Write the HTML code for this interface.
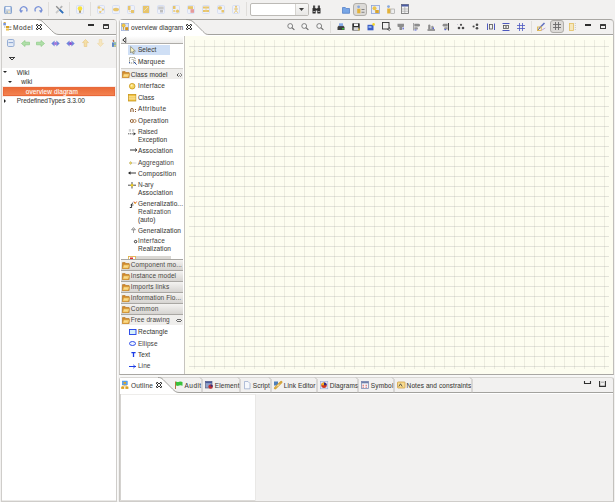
<!DOCTYPE html>
<html><head><meta charset="utf-8"><style>
html,body{margin:0;padding:0;}
body{width:615px;height:502px;position:relative;overflow:hidden;background:#f2f1f0;font-family:"Liberation Sans",sans-serif;}
.t{position:absolute;white-space:nowrap;line-height:8px;font-family:"Liberation Sans",sans-serif;-webkit-text-stroke:0.06px currentColor;}
svg{overflow:visible}
</style></head><body>
<svg style="position:absolute;left:4px;top:6px;" width="8" height="8" viewBox="0 0 8 8"><rect x="0.5" y="0.5" width="7" height="7" rx="0.8" fill="#b5c9e6" stroke="#7d9ccb" stroke-width="0.9"/><rect x="2" y="0.8" width="4" height="2.6" fill="#f4f6fb"/><rect x="1.8" y="4.6" width="4.4" height="2.8" fill="#e9e2c8"/><rect x="2.6" y="5.2" width="1" height="1.8" fill="#7d9ccb"/></svg>
<svg style="position:absolute;left:19px;top:6px;" width="9" height="7" viewBox="0 0 9 7"><g ><path d="M2.2 6.2 A3.3 3.3 0 1 1 7.6 5.5" fill="none" stroke="#7b93d8" stroke-width="1.25"/><path d="M0.3 3.8 L4.2 4.6 L2 7z" fill="#7b93d8"/></g></svg>
<svg style="position:absolute;left:34px;top:6px;" width="9" height="7" viewBox="0 0 9 7"><g transform="translate(9,0) scale(-1,1)"><path d="M2.2 6.2 A3.3 3.3 0 1 1 7.6 5.5" fill="none" stroke="#7b93d8" stroke-width="1.25"/><path d="M0.3 3.8 L4.2 4.6 L2 7z" fill="#7b93d8"/></g></svg>
<div style="position:absolute;left:48px;top:2px;width:1px;height:14px;background:#e0dedb"></div>
<svg style="position:absolute;left:55px;top:5px;" width="9" height="9" viewBox="0 0 9 9"><path d="M1.2 1.2 L7.8 7.8" stroke="#8d8d8d" stroke-width="1.3"/><path d="M7.2 1.2 L5.2 3.2" stroke="#b3b3b3" stroke-width="1.8"/><path d="M4.6 4.6 L8.2 8.2" stroke="#2f72c0" stroke-width="1.8"/><path d="M1 8 L3.6 5.4" stroke="#c9c9c9" stroke-width="1.8"/></svg>
<div style="position:absolute;left:69px;top:2px;width:1px;height:14px;background:#e0dedb"></div>
<svg style="position:absolute;left:76px;top:5px;" width="8" height="9" viewBox="0 0 8 9"><rect x="0.5" y="0.5" width="7" height="8" rx="1.2" fill="#eef1fa" stroke="#d5dcf2" stroke-width="0.9"/><circle cx="4" cy="3.6" r="2.3" fill="#f7e23c"/><rect x="3" y="5.6" width="2" height="2.2" fill="#b09a66"/></svg>
<div style="position:absolute;left:90px;top:2px;width:1px;height:14px;background:#e0dedb"></div>
<svg style="position:absolute;left:97px;top:5px;" width="8" height="9" viewBox="0 0 8 9"><rect x="0.5" y="0.5" width="7" height="8" rx="1.2" fill="#eef1fa" stroke="#d5dcf2" stroke-width="0.9"/><circle cx="2" cy="2.5" r="1.3" fill="#e7c56c"/><circle cx="6" cy="4.5" r="1.1" fill="#e7c56c"/><circle cx="3.2" cy="7" r="1.1" fill="#e7c56c"/><path d="M2 2.5 Q5 2 6 4.5 Q5 6.5 3.2 7" fill="none" stroke="#ecd08a" stroke-width="0.6"/></svg>
<svg style="position:absolute;left:112px;top:5px;" width="8" height="9" viewBox="0 0 8 9"><rect x="0.5" y="0.5" width="7" height="8" rx="1.2" fill="#eef1fa" stroke="#d5dcf2" stroke-width="0.9"/><ellipse cx="4" cy="4.5" rx="3" ry="1.8" fill="#e7c56c"/></svg>
<svg style="position:absolute;left:127px;top:5px;" width="8" height="9" viewBox="0 0 8 9"><rect x="0.5" y="0.5" width="7" height="8" rx="1.2" fill="#eef1fa" stroke="#d5dcf2" stroke-width="0.9"/><rect x="1" y="1" width="2.5" height="4" fill="#e7c56c"/><rect x="4" y="5" width="3" height="3" fill="#e7c56c"/><path d="M2.2 5 V6.5 H4" stroke="#ecd08a" stroke-width="0.6" fill="none"/></svg>
<svg style="position:absolute;left:142px;top:5px;" width="8" height="9" viewBox="0 0 8 9"><rect x="0.5" y="0.5" width="7" height="8" rx="1.2" fill="#eef1fa" stroke="#d5dcf2" stroke-width="0.9"/><rect x="1" y="1" width="6" height="7" fill="#e7c56c"/><path d="M2 6 L6 2" stroke="#f6e6b8" stroke-width="0.8"/></svg>
<svg style="position:absolute;left:157px;top:5px;" width="8" height="9" viewBox="0 0 8 9"><rect x="0.5" y="0.5" width="7" height="8" rx="1.2" fill="#eef1fa" stroke="#d5dcf2" stroke-width="0.9"/><rect x="1.2" y="1.5" width="5.5" height="3" fill="#c9c9c9"/><rect x="3" y="5" width="3" height="2.5" fill="#bdbdbd"/></svg>
<svg style="position:absolute;left:172px;top:5px;" width="8" height="9" viewBox="0 0 8 9"><rect x="0.5" y="0.5" width="7" height="8" rx="1.2" fill="#eef1fa" stroke="#d5dcf2" stroke-width="0.9"/><rect x="1" y="1" width="2.5" height="3" fill="#e7c56c"/><circle cx="5.5" cy="6.2" r="1.6" fill="#e7c56c"/><rect x="1.2" y="5" width="2" height="2" fill="#ecd08a"/></svg>
<svg style="position:absolute;left:187px;top:5px;" width="8" height="9" viewBox="0 0 8 9"><rect x="0.5" y="0.5" width="7" height="8" rx="1.2" fill="#eef1fa" stroke="#d5dcf2" stroke-width="0.9"/><rect x="1" y="1.2" width="5" height="3" fill="#e7c56c"/><rect x="3.5" y="4.2" width="3.5" height="3.6" fill="#e59a9a"/></svg>
<svg style="position:absolute;left:202px;top:5px;" width="8" height="9" viewBox="0 0 8 9"><rect x="0.5" y="0.5" width="7" height="8" rx="1.2" fill="#eef1fa" stroke="#d5dcf2" stroke-width="0.9"/><rect x="1" y="1.5" width="6" height="2" fill="#e7c56c"/><rect x="1" y="5" width="6" height="2" fill="#e7c56c"/><path d="M4 1.5 V7" stroke="#ecd08a" stroke-width="0.8"/></svg>
<svg style="position:absolute;left:217px;top:5px;" width="8" height="9" viewBox="0 0 8 9"><rect x="0.5" y="0.5" width="7" height="8" rx="1.2" fill="#eef1fa" stroke="#d5dcf2" stroke-width="0.9"/><ellipse cx="3" cy="3" rx="2.2" ry="1.8" fill="#e7c56c"/><rect x="4.5" y="5" width="2.5" height="2.5" fill="#e7c56c"/></svg>
<svg style="position:absolute;left:232px;top:5px;" width="8" height="9" viewBox="0 0 8 9"><rect x="0.5" y="0.5" width="7" height="8" rx="1.2" fill="#eef1fa" stroke="#d5dcf2" stroke-width="0.9"/><circle cx="4" cy="1.8" r="1" fill="#e7c56c"/><path d="M4 2.8 V5.5 M2 4 H6 M4 5.5 L2.2 7.8 M4 5.5 L5.8 7.8" stroke="#e7c56c" stroke-width="0.9"/></svg>
<div style="position:absolute;left:246px;top:2px;width:1px;height:14px;background:#e0dedb"></div>
<div style="position:absolute;left:250px;top:3px;width:57px;height:11px;border:1px solid #bcbab6;border-radius:2px;background:#fff"></div>
<div style="position:absolute;left:295px;top:4px;width:12px;height:11px;background:linear-gradient(#f8f8f7,#e8e7e5);border-left:1px solid #d6d4d0;border-radius:0 2px 2px 0"></div>
<svg style="position:absolute;left:299px;top:8px;" width="6" height="3" viewBox="0 0 6 3"><path d="M0 0 L5 0 L2.5 3z" fill="#3a3a3a"/></svg>
<svg style="position:absolute;left:312px;top:5px;" width="9" height="9" viewBox="0 0 9 9"><rect x="0.5" y="3" width="3.2" height="5.5" rx="0.6" fill="#303030"/><rect x="5.3" y="3" width="3.2" height="5.5" rx="0.6" fill="#303030"/><rect x="2.5" y="3.5" width="4" height="2" fill="#303030"/><rect x="1" y="0.5" width="2.2" height="2.6" fill="#505050"/><rect x="5.8" y="0.5" width="2.2" height="2.6" fill="#505050"/><rect x="1.2" y="6" width="2" height="1" fill="#aaa"/><rect x="5.8" y="6" width="2" height="1" fill="#aaa"/></svg>
<svg style="position:absolute;left:342px;top:6px;" width="8" height="8" viewBox="0 0 8 8"><path d="M0.5 1.5 h2.8 l0.9 1 h3.3 v4.8 h-7z" fill="#78a6e6" stroke="#4a78c4" stroke-width="0.7"/></svg>
<div style="position:absolute;left:353px;top:3px;width:12px;height:11px;border:1px solid #b0aeaa;border-radius:3px;background:#dcdad7"></div>
<svg style="position:absolute;left:356px;top:5px;" width="9" height="9" viewBox="0 0 9 9"><circle cx="2.6" cy="1.8" r="1.4" fill="#88a8dc"/><rect x="1.2" y="3.8" width="3.2" height="4.5" fill="#e3b23a"/><rect x="5.5" y="4" width="3" height="0.9" fill="#7a7a7a"/><rect x="5.5" y="6.8" width="3" height="0.9" fill="#7a7a7a"/></svg>
<svg style="position:absolute;left:371px;top:5px;" width="9" height="9" viewBox="0 0 9 9"><rect x="0.5" y="0.5" width="8" height="8" fill="#e6ecfa" stroke="#8da3d6" stroke-width="0.8"/><circle cx="3.5" cy="3.2" r="2" fill="#ecc54e"/><rect x="4.2" y="5" width="3.6" height="3" fill="#d9a52e"/></svg>
<svg style="position:absolute;left:386px;top:5px;" width="9" height="9" viewBox="0 0 9 9"><circle cx="2.5" cy="1.6" r="1.4" fill="#88a8dc"/><rect x="1.2" y="3.5" width="3.2" height="5" fill="#e3b23a"/><rect x="4.8" y="4" width="3.8" height="4.5" fill="#ededed" stroke="#999" stroke-width="0.6"/></svg>
<svg style="position:absolute;left:401px;top:4px;" width="8" height="10" viewBox="0 0 8 10"><rect x="0.5" y="0.5" width="7" height="9" fill="#f4f4f4" stroke="#6b6b6b" stroke-width="0.8"/><rect x="0.5" y="0.5" width="7" height="2" fill="#4b5ca6"/><path d="M1 5 h6 M1 7.2 h6 M3.8 2.5 v7" stroke="#9a9a9a" stroke-width="0.6"/></svg>
<div style="position:absolute;left:1px;top:19px;width:114px;height:481px;border:1px solid #cfcdca;border-top-color:#a9a7a3;border-radius:4px 4px 0 0;background:#fff"></div>
<div style="position:absolute;left:117px;top:20px;width:1px;height:481px;background:#fafaf9"></div>
<div style="position:absolute;left:2px;top:500px;width:114px;height:1px;background:#ebeae8"></div>
<div style="position:absolute;left:2px;top:20px;width:114px;height:15px;background:#f2f1f0;border-radius:0 2px 0 0"></div>
<svg style="position:absolute;left:2px;top:19px;" width="114" height="17" viewBox="0 0 114 17"><path d="M0 1 L35 1 C38 1 39.5 1.5 41.5 3.5 L49.5 11.5 C52 14 53.5 15.5 57 15.5 L114 15.5 L114 17 L0 17Z" fill="#fff"/><path d="M35 0.5 C38 0.5 39.5 1.5 41.5 3.5 L49.5 11.5 C52 14 53.5 15.5 57 15.5 L114 15.5" fill="none" stroke="#999793" stroke-width="0.9"/></svg>
<div style="position:absolute;left:2px;top:36px;width:114px;height:32px;background:#f2f1f0"></div>
<svg style="position:absolute;left:3px;top:22px;" width="9" height="9" viewBox="0 0 9 9"><rect x="0.3" y="0.8" width="2.6" height="2.6" fill="#7895d8"/><rect x="0.8" y="0" width="1.8" height="1" fill="#e0b040"/><rect x="3" y="4" width="3" height="2" fill="#d9a020"/><rect x="3" y="6.5" width="3" height="2" fill="#e9c050"/><rect x="6.2" y="4.6" width="2.2" height="0.9" fill="#777"/><rect x="6.2" y="7" width="2.2" height="0.9" fill="#777"/><rect x="1.3" y="4.5" width="1" height="1" fill="#888"/></svg>
<div class="t" style="left:13px;top:24px;color:#3c3b37;font-size:6.5px;letter-spacing:0.5px">Model</div>
<svg style="position:absolute;left:36px;top:24px;shape-rendering:crispEdges" width="6" height="6" viewBox="0 0 6 6"><rect x="0" y="0" width="1" height="1" fill="#8c8c8c"/><rect x="1" y="0" width="1" height="1" fill="#333333"/><rect x="4" y="0" width="1" height="1" fill="#333333"/><rect x="5" y="0" width="1" height="1" fill="#8c8c8c"/><rect x="0" y="1" width="1" height="1" fill="#333333"/><rect x="2" y="1" width="1" height="1" fill="#333333"/><rect x="3" y="1" width="1" height="1" fill="#333333"/><rect x="5" y="1" width="1" height="1" fill="#333333"/><rect x="1" y="2" width="1" height="1" fill="#333333"/><rect x="4" y="2" width="1" height="1" fill="#333333"/><rect x="1" y="3" width="1" height="1" fill="#333333"/><rect x="4" y="3" width="1" height="1" fill="#333333"/><rect x="0" y="4" width="1" height="1" fill="#333333"/><rect x="2" y="4" width="1" height="1" fill="#333333"/><rect x="3" y="4" width="1" height="1" fill="#333333"/><rect x="5" y="4" width="1" height="1" fill="#333333"/><rect x="0" y="5" width="1" height="1" fill="#8c8c8c"/><rect x="1" y="5" width="1" height="1" fill="#333333"/><rect x="4" y="5" width="1" height="1" fill="#333333"/><rect x="5" y="5" width="1" height="1" fill="#8c8c8c"/></svg>
<div style="position:absolute;left:88px;top:24px;width:6px;height:2px;background:#2e2e2e"></div>
<div style="position:absolute;left:103px;top:24px;width:4px;height:2px;border:1px solid #3a3a3a;border-top-width:2px;border-radius:0.5px"></div>
<svg style="position:absolute;left:7px;top:39px;" width="8" height="8" viewBox="0 0 8 8"><rect x="0.5" y="0.5" width="6.5" height="7" rx="1.2" fill="#e4ebf6" stroke="#7f9ccc" stroke-width="0.8"/><rect x="1.5" y="3.2" width="4.5" height="0.9" fill="#7f9ccc"/></svg>
<svg style="position:absolute;left:21px;top:40px;" width="9" height="7" viewBox="0 0 9 7"><path d="M0.5 3.5 L4 0.5 V2.2 H8.5 V4.8 H4 V6.5Z" fill="#b0dfa9" stroke="#8ccc85" stroke-width="0.7"/></svg>
<svg style="position:absolute;left:36px;top:40px;" width="9" height="7" viewBox="0 0 9 7"><path d="M8.5 3.5 L5 0.5 V2.2 H0.5 V4.8 H5 V6.5Z" fill="#b0dfa9" stroke="#8ccc85" stroke-width="0.7"/></svg>
<svg style="position:absolute;left:51px;top:40px;" width="9" height="7" viewBox="0 0 9 7"><path d="M0.3 3.5 L3.6 0.5 V6.5Z M8.7 3.5 L5.4 0.5 V6.5Z" fill="#6f85dc"/><circle cx="4.5" cy="3.5" r="1.5" fill="#a873d6"/></svg>
<svg style="position:absolute;left:66px;top:40px;" width="9" height="7" viewBox="0 0 9 7"><path d="M0.3 3.5 L3.6 0.5 V6.5Z M8.7 3.5 L5.4 0.5 V6.5Z" fill="#6f85dc"/><circle cx="4.5" cy="3.5" r="1.5" fill="#8c4fcc"/></svg>
<svg style="position:absolute;left:82px;top:39px;" width="7" height="8" viewBox="0 0 7 8"><path d="M3.5 0.5 L6.5 3.6 H4.8 V7.5 H2.2 V3.6 H0.5Z" fill="#f5dfa6" stroke="#e8c57c" stroke-width="0.6"/></svg>
<svg style="position:absolute;left:97px;top:39px;" width="7" height="8" viewBox="0 0 7 8"><path d="M3.5 7.5 L6.5 4.4 H4.8 V0.5 H2.2 V4.4 H0.5Z" fill="#f6e6c0" stroke="#efd6a2" stroke-width="0.6"/></svg>
<svg style="position:absolute;left:112px;top:38px;" width="4" height="10" viewBox="0 0 4 10"><path d="M1 1.5 L2.5 3 L1.8 4.2 L0.6 3z" fill="#b0643a"/><rect x="0" y="4.2" width="4" height="4.8" fill="#86a8d8"/><rect x="0.3" y="5" width="1.3" height="3.6" fill="#4d78b8"/><circle cx="3" cy="5.3" r="0.9" fill="#9ad07a"/><circle cx="3" cy="7.8" r="0.9" fill="#e8e060"/></svg>
<svg style="position:absolute;left:9px;top:57px;shape-rendering:crispEdges" width="6" height="3" viewBox="0 0 6 3"><rect x="0" y="0" width="1" height="1" fill="#3a3a3a"/><rect x="1" y="0" width="1" height="1" fill="#3a3a3a"/><rect x="2" y="0" width="1" height="1" fill="#3a3a3a"/><rect x="3" y="0" width="1" height="1" fill="#3a3a3a"/><rect x="4" y="0" width="1" height="1" fill="#3a3a3a"/><rect x="5" y="0" width="1" height="1" fill="#3a3a3a"/><rect x="1" y="1" width="1" height="1" fill="#3a3a3a"/><rect x="4" y="1" width="1" height="1" fill="#3a3a3a"/><rect x="2" y="2" width="1" height="1" fill="#3a3a3a"/><rect x="3" y="2" width="1" height="1" fill="#3a3a3a"/></svg>
<svg style="position:absolute;left:3px;top:71px;" width="4" height="2" viewBox="0 0 4 2"><path d="M0 0 L4 0 L2 2z" fill="#222"/></svg>
<div class="t" style="left:16.8px;top:69px;color:#3c3b37;font-size:6.5px;letter-spacing:0.09px;">Wiki</div>
<svg style="position:absolute;left:8px;top:80.5px;" width="4" height="2" viewBox="0 0 4 2"><path d="M0 0 L4 0 L2 2z" fill="#222"/></svg>
<div class="t" style="left:21.2px;top:78px;color:#3c3b37;font-size:6.5px;letter-spacing:0.09px;">wiki</div>
<div style="position:absolute;left:2px;top:86px;width:114px;height:11px;background:#fbece6"></div>
<div style="position:absolute;left:3px;top:87px;width:112px;height:9px;box-sizing:border-box;border:1px solid #e8693a;background:linear-gradient(#ea6c38,#f3814f)"></div>
<div class="t" style="left:25.7px;top:88px;color:#ffffff;font-size:6.5px;letter-spacing:0.09px;">overview diagram</div>
<svg style="position:absolute;left:4px;top:98.5px;" width="2" height="4" viewBox="0 0 2 4"><path d="M0 0 L2 2 L0 4z" fill="#222"/></svg>
<div class="t" style="left:16.8px;top:97px;color:#3c3b37;font-size:6.5px;letter-spacing:-0.03px">PredefinedTypes 3.3.00</div>
<div style="position:absolute;left:119px;top:19px;width:493px;height:354px;border:1px solid #c9c7c3;border-top-color:#a9a7a3;border-right-color:#bfbdb9;border-bottom-color:#a9a7a3;border-radius:4px 4px 0 0;background:#f2f1f0"></div>
<div style="position:absolute;left:119px;top:375px;width:495px;height:2px;background:#f8f8f7"></div>
<svg style="position:absolute;left:120px;top:19px;" width="493" height="17" viewBox="0 0 493 17"><path d="M0 1 L66 1 C70 1 72 1.5 75 4.5 L83 12.5 C85.5 15 86 15.5 89 15.5 L493 15.5 L493 17 L0 17Z" fill="#fff"/><path d="M66 0.5 C70 0.5 72 1.5 75 4.5 L83 12.5 C85.5 15 86 15.5 89 15.5 L493 15.5" fill="none" stroke="#999793" stroke-width="0.9"/></svg>
<svg style="position:absolute;left:121px;top:23px;" width="8" height="8" viewBox="0 0 8 8"><rect x="0.4" y="0.4" width="7.2" height="7.2" fill="#dde5f7" stroke="#9fb2dd" stroke-width="0.8"/><circle cx="2.6" cy="2.4" r="1.7" fill="#f2c848" stroke="#c89a20" stroke-width="0.4"/><rect x="4.2" y="4.2" width="3" height="3" fill="#d8961c"/><rect x="2.2" y="4" width="0.8" height="2.8" fill="#c89a20"/></svg>
<div class="t" style="left:131px;top:24px;color:#3c3b37;font-size:6.5px;letter-spacing:0.09px;">overview diagram</div>
<svg style="position:absolute;left:186px;top:24px;shape-rendering:crispEdges" width="6" height="6" viewBox="0 0 6 6"><rect x="0" y="0" width="1" height="1" fill="#8c8c8c"/><rect x="1" y="0" width="1" height="1" fill="#333333"/><rect x="4" y="0" width="1" height="1" fill="#333333"/><rect x="5" y="0" width="1" height="1" fill="#8c8c8c"/><rect x="0" y="1" width="1" height="1" fill="#333333"/><rect x="2" y="1" width="1" height="1" fill="#333333"/><rect x="3" y="1" width="1" height="1" fill="#333333"/><rect x="5" y="1" width="1" height="1" fill="#333333"/><rect x="1" y="2" width="1" height="1" fill="#333333"/><rect x="4" y="2" width="1" height="1" fill="#333333"/><rect x="1" y="3" width="1" height="1" fill="#333333"/><rect x="4" y="3" width="1" height="1" fill="#333333"/><rect x="0" y="4" width="1" height="1" fill="#333333"/><rect x="2" y="4" width="1" height="1" fill="#333333"/><rect x="3" y="4" width="1" height="1" fill="#333333"/><rect x="5" y="4" width="1" height="1" fill="#333333"/><rect x="0" y="5" width="1" height="1" fill="#8c8c8c"/><rect x="1" y="5" width="1" height="1" fill="#333333"/><rect x="4" y="5" width="1" height="1" fill="#333333"/><rect x="5" y="5" width="1" height="1" fill="#8c8c8c"/></svg>
<svg style="position:absolute;left:287px;top:23px;" width="8" height="7" viewBox="0 0 8 7"><circle cx="3.2" cy="3" r="2.4" fill="#f7f7f7" stroke="#666" stroke-width="0.8"/><path d="M4.9 4.7 L7.4 6.9" stroke="#666" stroke-width="1.1"/></svg>
<svg style="position:absolute;left:301px;top:23px;" width="8" height="7" viewBox="0 0 8 7"><circle cx="3.2" cy="3" r="2.4" fill="#f7f7f7" stroke="#666" stroke-width="0.8"/><path d="M4.9 4.7 L7.4 6.9" stroke="#666" stroke-width="1.1"/></svg>
<svg style="position:absolute;left:316px;top:23px;" width="8" height="7" viewBox="0 0 8 7"><circle cx="3.2" cy="3" r="2.4" fill="#f7f7f7" stroke="#666" stroke-width="0.8"/><path d="M4.9 4.7 L7.4 6.9" stroke="#666" stroke-width="1.1"/></svg>
<div style="position:absolute;left:330px;top:21px;width:1px;height:12px;background:#e0dedb"></div>
<svg style="position:absolute;left:337px;top:23px;" width="8" height="8" viewBox="0 0 8 8"><path d="M0.5 4 L2 2.5 H6 L7.5 4 V7 H0.5z" fill="#3e3e3e"/><rect x="2" y="0.3" width="4" height="2.8" fill="#86a8e6"/><rect x="5" y="5" width="2" height="1.5" fill="#37b037"/></svg>
<svg style="position:absolute;left:352px;top:23px;" width="8" height="8" viewBox="0 0 8 8"><rect x="0.3" y="0.3" width="7.4" height="7.2" rx="0.6" fill="#303030"/><rect x="2" y="0.6" width="4" height="2.4" fill="#f5f5f5"/><rect x="1.6" y="4.2" width="4.8" height="3" fill="#d6d6d6"/><rect x="6" y="5.5" width="1.5" height="1.8" fill="#e0c040"/></svg>
<svg style="position:absolute;left:367px;top:23px;" width="8" height="8" viewBox="0 0 8 8"><rect x="0.5" y="1.8" width="6" height="5.5" fill="#3c5ec4"/><rect x="1.5" y="3" width="3" height="2" fill="#8eb0ee"/><circle cx="6.6" cy="1.4" r="1.3" fill="#f4d222"/></svg>
<svg style="position:absolute;left:382px;top:22px;" width="8" height="9" viewBox="0 0 8 9"><rect x="0.5" y="0.5" width="6.5" height="6.5" fill="none" stroke="#303030" stroke-width="0.9"/><path d="M5 7 L7.8 8.8 M7 5 L8.8 7.8" stroke="#303030" stroke-width="0.7"/></svg>
<svg style="position:absolute;left:397px;top:23px;" width="8" height="8" viewBox="0 0 8 8"><path d="M0.5 0.8 H7 V3.2 Q7 4 6 4 H5.2 V6.3 Q5.2 7 4.4 7 H3.2 Q2.4 7 2.4 6.3 V4 H1.5 Q0.5 4 0.5 3.2z" fill="#8d8d8d"/><rect x="5.6" y="4.6" width="1.2" height="1.8" fill="#5060d8"/></svg>
<svg style="position:absolute;left:413px;top:23px;" width="8" height="8" viewBox="0 0 8 8"><rect x="0" y="0" width="1" height="7.5" fill="#a6a6a6"/><path d="M1.3 0.8 H5.5 Q7 0.8 7 2.2 Q7 3.6 5.5 3.6 H1.3z" fill="#8d8d8d"/><path d="M1.3 4.2 H3.8 Q5 4.2 5 5.4 Q5 6.6 3.8 6.6 H1.3z" fill="#9a9a9a"/><rect x="1.5" y="6.6" width="2" height="0.9" fill="#5060d8"/></svg>
<svg style="position:absolute;left:427px;top:23px;" width="8" height="8" viewBox="0 0 8 8"><rect x="0.5" y="6.5" width="7.5" height="1" fill="#404040"/><path d="M1.2 6.3 V2.5 Q1.2 1.5 2.3 1.5 Q3.4 1.5 3.4 2.5 V6.3z" fill="#8d8d8d"/><path d="M4.3 6.3 V3.8 Q4.3 2.8 5.4 2.8 Q6.5 2.8 6.5 3.8 V6.3z" fill="#9a9a9a"/><rect x="5.8" y="4.5" width="1.2" height="1.6" fill="#5060d8"/></svg>
<svg style="position:absolute;left:442px;top:23px;" width="7" height="8" viewBox="0 0 7 8"><rect x="6" y="0" width="1" height="7.5" fill="#404040"/><path d="M5.7 0.8 H2 Q0.6 0.8 0.6 2.2 Q0.6 3.6 2 3.6 H5.7z" fill="#8d8d8d"/><path d="M5.7 4.2 H3.2 Q2 4.2 2 5.4 Q2 6.6 3.2 6.6 H5.7z" fill="#9a9a9a"/><rect x="2.5" y="6" width="1.5" height="1.2" fill="#5060d8"/></svg>
<svg style="position:absolute;left:457px;top:23px;" width="8" height="8" viewBox="0 0 8 8"><circle cx="4" cy="1.8" r="1.1" fill="#4a4a4a"/><circle cx="2" cy="5" r="1.3" fill="#4a4a4a"/><circle cx="6" cy="5" r="1.3" fill="#4a4a4a"/><rect x="0" y="1" width="0.6" height="0.6" fill="#88a"/></svg>
<svg style="position:absolute;left:472px;top:23px;" width="8" height="8" viewBox="0 0 8 8"><circle cx="1.6" cy="3.5" r="1.1" fill="#4a4a4a"/><circle cx="5" cy="1.8" r="1.3" fill="#4a4a4a"/><circle cx="5" cy="5.2" r="1.3" fill="#4a4a4a"/></svg>
<svg style="position:absolute;left:487px;top:23px;" width="8" height="8" viewBox="0 0 8 8"><path d="M0.5 0.5 V7 M7.5 0.5 V7" stroke="#3b47b8" stroke-width="0.9"/><rect x="2.5" y="1.5" width="3" height="4.5" fill="none" stroke="#555" stroke-width="0.8"/></svg>
<svg style="position:absolute;left:502px;top:23px;" width="8" height="8" viewBox="0 0 8 8"><path d="M0.5 0.5 H7.5 M0.5 7.5 H7.5" stroke="#3b47b8" stroke-width="0.9"/><rect x="1.5" y="2.5" width="5" height="3" fill="none" stroke="#555" stroke-width="0.8"/><rect x="3" y="3.5" width="2" height="1" fill="#555"/></svg>
<svg style="position:absolute;left:517px;top:23px;" width="8" height="8" viewBox="0 0 8 8"><path d="M2.5 0 V8 M5.5 0 V8 M0 2.5 H8 M0 5.5 H8" stroke="#4b58c0" stroke-width="0.8"/></svg>
<div style="position:absolute;left:531px;top:21px;width:1px;height:12px;background:#e0dedb"></div>
<svg style="position:absolute;left:537px;top:22px;" width="9" height="9" viewBox="0 0 9 9"><path d="M2 6.5 L7.5 1" stroke="#6272c0" stroke-width="1.6"/><path d="M0.5 8.5 L2 6.5" stroke="#333" stroke-width="0.8"/><rect x="0.5" y="5" width="3.8" height="3.5" fill="none" stroke="#e0b850" stroke-width="0.9"/><path d="M4.5 8.3 L8.3 6" stroke="#b8a0d8" stroke-width="0.9"/></svg>
<div style="position:absolute;left:550px;top:20px;width:12px;height:11px;border:1px solid #b0aeaa;border-radius:3px;background:#dcdad7"></div>
<svg style="position:absolute;left:553px;top:22px;" width="8" height="8" viewBox="0 0 8 8"><path d="M2.5 0 V8 M5.5 0 V8 M0 2.5 H8 M0 5.5 H8" stroke="#6a6a6a" stroke-width="0.9"/></svg>
<svg style="position:absolute;left:569px;top:23px;" width="7" height="8" viewBox="0 0 7 8"><rect x="0.5" y="0.5" width="4" height="7" fill="#f6e7bc" stroke="#e3bf60" stroke-width="0.8"/><path d="M6.3 0 V8" stroke="#bdbdbd" stroke-width="0.8" stroke-dasharray="1 1"/></svg>
<div style="position:absolute;left:585px;top:24px;width:6px;height:2px;background:#2e2e2e"></div>
<div style="position:absolute;left:600px;top:24px;width:4px;height:2px;border:1px solid #3a3a3a;border-top-width:2px;border-radius:0.5px"></div>
<div style="position:absolute;left:120px;top:35px;width:64px;height:339px;background:#fff"></div>
<div style="position:absolute;left:121px;top:36px;width:62px;height:7px;background:linear-gradient(#ffffff,#ecebe9)"></div>
<div style="position:absolute;left:121px;top:43px;width:62px;height:1px;background:#aeaca8"></div>
<svg style="position:absolute;left:122px;top:37px;" width="5" height="6" viewBox="0 0 5 6"><path d="M3.8 0.5 L0.8 3 L3.8 5.5" fill="none" stroke="#333" stroke-width="1"/><path d="M3.8 0.5 V5.5" stroke="#333" stroke-width="0.8"/></svg>
<div style="position:absolute;left:128px;top:45px;width:42px;height:10px;background:#cfdff5"></div>
<svg style="position:absolute;left:130px;top:46px;" width="6" height="8" viewBox="0 0 6 8"><path d="M0.6 0.5 L0.6 7 L2 5.6 L3.2 7.8 L4.3 7.3 L3.2 5.1 L5.4 5.1z" fill="#fbf6c4" stroke="#6b6b5a" stroke-width="0.6"/></svg>
<div class="t" style="left:137.9px;top:46px;color:#3c3b37;font-size:6.5px;letter-spacing:0.09px;">Select</div>
<svg style="position:absolute;left:129px;top:57px;" width="8" height="8" viewBox="0 0 8 8"><rect x="0.5" y="0.5" width="5.5" height="5.5" fill="none" stroke="#6e6e58" stroke-width="0.8" stroke-dasharray="1.2 0.8"/><path d="M2.5 2.5 h2 v2" fill="none" stroke="#9a9a80" stroke-width="0.6"/><path d="M4.6 4.6 L7.6 7.6" stroke="#2a50a8" stroke-width="1"/><rect x="0" y="5.2" width="1" height="1" fill="#2a50a8"/></svg>
<div class="t" style="left:137.9px;top:58px;color:#3c3b37;font-size:6.5px;letter-spacing:0.22px">Marquee</div>
<div style="position:absolute;left:121px;top:68px;width:62px;height:1px;background:#d4d2ce"></div>
<div style="position:absolute;left:121px;top:69px;width:62px;height:10px;background:#efeeec"></div>
<svg style="position:absolute;left:122px;top:71px;" width="8" height="7" viewBox="0 0 8 7"><path d="M0.5 0.6 h2.6 l0.8 0.9 h3.2 v5 h-6.6z" fill="#d4892a" stroke="#b0701c" stroke-width="0.6"/><path d="M1.4 2.6 h6.3 l-1.3 3.9 h-5.9z" fill="#f5cf72" stroke="#c98526" stroke-width="0.55"/><path d="M2 4.3 h3.5" stroke="#fbe6b0" stroke-width="0.6"/></svg>
<div class="t" style="left:130.8px;top:71px;color:#3c3b37;font-size:6.5px;letter-spacing:0.09px;">Class model</div>
<svg style="position:absolute;left:177px;top:73px;shape-rendering:crispEdges" width="5" height="4" viewBox="0 0 5 4"><rect x="1" y="0" width="1" height="1" fill="#8a8a8a"/><rect x="3" y="0" width="1" height="1" fill="#8a8a8a"/><rect x="0" y="1" width="1" height="1" fill="#4a4a4a"/><rect x="4" y="1" width="1" height="1" fill="#8a8a8a"/><rect x="0" y="2" width="1" height="1" fill="#4a4a4a"/><rect x="2" y="2" width="1" height="1" fill="#8a8a8a"/><rect x="4" y="2" width="1" height="1" fill="#8a8a8a"/><rect x="1" y="3" width="1" height="1" fill="#8a8a8a"/><rect x="3" y="3" width="1" height="1" fill="#8a8a8a"/></svg>
<div class="t" style="left:137.9px;top:82px;color:#3c3b37;font-size:6.5px;letter-spacing:0.2px">Interface</div>
<svg style="position:absolute;left:129px;top:83px;" width="8" height="8" viewBox="0 0 8 8"><circle cx="3.2" cy="3.2" r="2.8" fill="#f6d660" stroke="#c7961c" stroke-width="0.8"/><circle cx="2.6" cy="2.6" r="1" fill="#fff4c0"/></svg>
<div class="t" style="left:137.9px;top:94px;color:#3c3b37;font-size:6.5px;letter-spacing:0.03px">Class</div>
<svg style="position:absolute;left:128px;top:94px;" width="8" height="8" viewBox="0 0 8 8"><rect x="0.4" y="0.4" width="7.4" height="6.6" fill="#f2c444" stroke="#c8961c" stroke-width="0.8"/><path d="M0.8 2.9 H7.6 M0.8 4.9 H7.6" stroke="#fff4cc" stroke-width="0.8"/></svg>
<div class="t" style="left:137.9px;top:105px;color:#3c3b37;font-size:6.5px;letter-spacing:0.5px">Attribute</div>
<svg style="position:absolute;left:130px;top:107.5px;" width="8" height="8" viewBox="0 0 8 8"><path d="M0.8 4 V1.2 Q0.8 0.5 2 0.5 Q3.2 0.5 3.2 1.5 V4" fill="none" stroke="#8a5526" stroke-width="1"/><rect x="5" y="1" width="1" height="1" fill="#8a5526"/><rect x="5" y="3" width="1" height="1" fill="#8a5526"/></svg>
<div class="t" style="left:137.9px;top:117px;color:#3c3b37;font-size:6.5px;letter-spacing:0.25px">Operation</div>
<svg style="position:absolute;left:130px;top:118.8px;" width="8" height="8" viewBox="0 0 8 8"><circle cx="1.8" cy="2" r="1.5" fill="none" stroke="#8a5526" stroke-width="0.9"/><circle cx="4.6" cy="2" r="1.5" fill="none" stroke="#b08050" stroke-width="0.9"/></svg>
<div class="t" style="left:137.9px;top:128px;color:#44423e;font-size:6.5px;letter-spacing:-0.12px;-webkit-text-stroke:0">Raised</div>
<div class="t" style="left:137.9px;top:136px;color:#3c3b37;font-size:6.5px;letter-spacing:0.09px;">Exception</div>
<svg style="position:absolute;left:128px;top:129px;" width="8" height="8" viewBox="0 0 8 8"><path d="M0 4.8 H5.5" stroke="#333" stroke-width="0.8" stroke-dasharray="1.2 0.6"/><path d="M5.5 3.2 L8 4.8 L5.5 6.4z" fill="#333"/><path d="M0.8 0.8 H3 M0.8 2 H3 M4 0.8 H6.5 M4 2 H6" stroke="#999" stroke-width="0.6"/></svg>
<div class="t" style="left:137.9px;top:147px;color:#3c3b37;font-size:6.5px;letter-spacing:0.17px">Association</div>
<svg style="position:absolute;left:129.5px;top:148.3px;" width="8" height="8" viewBox="0 0 8 8"><path d="M0 2 H6.5" stroke="#222" stroke-width="0.9"/><path d="M5 0.5 L7 2 L5 3.5" fill="none" stroke="#222" stroke-width="0.8"/></svg>
<div class="t" style="left:137.9px;top:159px;color:#44423e;font-size:6.5px;letter-spacing:0.09px;;-webkit-text-stroke:0">Aggregation</div>
<svg style="position:absolute;left:129px;top:161px;" width="8" height="8" viewBox="0 0 8 8"><path d="M0.3 2 L1.6 0.6 L2.9 2 L1.6 3.4z" fill="#f8e060" stroke="#9a8a40" stroke-width="0.5"/><path d="M3 2 H7.5" stroke="#d4d4d4" stroke-width="1"/></svg>
<div class="t" style="left:137.9px;top:170px;color:#3c3b37;font-size:6.5px;letter-spacing:0.2px">Composition</div>
<svg style="position:absolute;left:128.3px;top:171px;" width="8" height="8" viewBox="0 0 8 8"><path d="M2 2 H8" stroke="#222" stroke-width="0.9"/><path d="M0 2 L2.5 0.3 L2.5 3.7z" fill="#222"/></svg>
<div class="t" style="left:137.9px;top:181px;color:#44423e;font-size:6.5px;letter-spacing:-0.1px;-webkit-text-stroke:0">N-ary</div>
<div class="t" style="left:137.9px;top:189px;color:#3c3b37;font-size:6.5px;letter-spacing:0.17px">Association</div>
<svg style="position:absolute;left:128px;top:181.5px;" width="8" height="8" viewBox="0 0 8 8"><path d="M0 3.2 H8 M4 0 V6.5" stroke="#222" stroke-width="0.8"/><path d="M4 1.5 L5.6 3.2 L4 4.9 L2.4 3.2z" fill="#f2d020"/></svg>
<div class="t" style="left:137.9px;top:200px;color:#3c3b37;font-size:6.5px;letter-spacing:0.09px;">Generalizatio...</div>
<div class="t" style="left:137.9px;top:208px;color:#44423e;font-size:6.5px;letter-spacing:0.09px;;-webkit-text-stroke:0">Realization</div>
<div class="t" style="left:137.9px;top:216px;color:#3c3b37;font-size:6.5px;letter-spacing:0.09px;">(auto)</div>
<svg style="position:absolute;left:129px;top:200.5px;" width="8" height="8" viewBox="0 0 8 8"><path d="M0.8 6.5 H2.6 V3 L4.2 1.6" fill="none" stroke="#222" stroke-width="0.9"/><path d="M1.5 4 H4.5" stroke="#222" stroke-width="0.7"/><path d="M5 0.6 L6.2 2.4 L7.6 0.6" fill="none" stroke="#d02020" stroke-width="0.9"/><circle cx="6.2" cy="2" r="0.8" fill="#f0d020"/></svg>
<div class="t" style="left:137.9px;top:227px;color:#3c3b37;font-size:6.5px;letter-spacing:0.09px;">Generalization</div>
<svg style="position:absolute;left:131px;top:226.8px;" width="8" height="8" viewBox="0 0 8 8"><path d="M2.5 0.6 L0.6 2.8 H4.4z" fill="#fff" stroke="#666" stroke-width="0.7"/><path d="M2.5 2.8 V6" stroke="#777" stroke-width="0.7"/></svg>
<div class="t" style="left:137.9px;top:237px;color:#44423e;font-size:6.5px;letter-spacing:0.2px;-webkit-text-stroke:0">Interface</div>
<div class="t" style="left:137.9px;top:245px;color:#3c3b37;font-size:6.5px;letter-spacing:0.09px;">Realization</div>
<svg style="position:absolute;left:133.5px;top:239.6px;" width="8" height="8" viewBox="0 0 8 8"><circle cx="1.6" cy="1.6" r="1.2" fill="none" stroke="#222" stroke-width="0.9"/></svg>
<div style="position:absolute;left:128px;top:256px;width:43px;height:3px;background:#d9d7d3"></div>
<svg style="position:absolute;left:128px;top:256px;" width="8" height="3" viewBox="0 0 8 3"><rect x="0.5" y="0.5" width="7" height="3" fill="#fff" stroke="#e0b040" stroke-width="0.8"/><rect x="2" y="1.5" width="3" height="1.5" fill="#e03030"/></svg>
<div style="position:absolute;left:121px;top:259px;width:62px;height:1px;background:#a9a7a3"></div>
<div style="position:absolute;left:121px;top:260px;width:62px;height:10px;background:linear-gradient(#f4f3f1,#d6d4d1)"></div>
<svg style="position:absolute;left:122px;top:262px;" width="8" height="7" viewBox="0 0 8 7"><path d="M0.5 0.6 h2.6 l0.8 0.9 h3.2 v5 h-6.6z" fill="#d4892a" stroke="#b0701c" stroke-width="0.6"/><path d="M1.4 2.6 h6.3 l-1.3 3.9 h-5.9z" fill="#f5cf72" stroke="#c98526" stroke-width="0.55"/><path d="M2 4.3 h3.5" stroke="#fbe6b0" stroke-width="0.6"/></svg>
<div class="t" style="left:130.8px;top:261px;color:#4a4843;font-size:6.5px;letter-spacing:0.09px;;-webkit-text-stroke:0">Component mo...</div>
<div style="position:absolute;left:121px;top:270px;width:62px;height:1px;background:#a9a7a3"></div>
<div style="position:absolute;left:121px;top:271px;width:62px;height:10px;background:linear-gradient(#f4f3f1,#d6d4d1)"></div>
<svg style="position:absolute;left:122px;top:273px;" width="8" height="7" viewBox="0 0 8 7"><path d="M0.5 0.6 h2.6 l0.8 0.9 h3.2 v5 h-6.6z" fill="#d4892a" stroke="#b0701c" stroke-width="0.6"/><path d="M1.4 2.6 h6.3 l-1.3 3.9 h-5.9z" fill="#f5cf72" stroke="#c98526" stroke-width="0.55"/><path d="M2 4.3 h3.5" stroke="#fbe6b0" stroke-width="0.6"/></svg>
<div class="t" style="left:130.8px;top:272px;color:#4a4843;font-size:6.5px;letter-spacing:0.09px;;-webkit-text-stroke:0">Instance model</div>
<div style="position:absolute;left:121px;top:281px;width:62px;height:1px;background:#a9a7a3"></div>
<div style="position:absolute;left:121px;top:282px;width:62px;height:10px;background:linear-gradient(#f4f3f1,#d6d4d1)"></div>
<svg style="position:absolute;left:122px;top:284px;" width="8" height="7" viewBox="0 0 8 7"><path d="M0.5 0.6 h2.6 l0.8 0.9 h3.2 v5 h-6.6z" fill="#d4892a" stroke="#b0701c" stroke-width="0.6"/><path d="M1.4 2.6 h6.3 l-1.3 3.9 h-5.9z" fill="#f5cf72" stroke="#c98526" stroke-width="0.55"/><path d="M2 4.3 h3.5" stroke="#fbe6b0" stroke-width="0.6"/></svg>
<div class="t" style="left:130.8px;top:283px;color:#4a4843;font-size:6.5px;letter-spacing:0.16px;-webkit-text-stroke:0">Imports links</div>
<div style="position:absolute;left:121px;top:292px;width:62px;height:1px;background:#a9a7a3"></div>
<div style="position:absolute;left:121px;top:293px;width:62px;height:10px;background:linear-gradient(#f4f3f1,#d6d4d1)"></div>
<svg style="position:absolute;left:122px;top:295px;" width="8" height="7" viewBox="0 0 8 7"><path d="M0.5 0.6 h2.6 l0.8 0.9 h3.2 v5 h-6.6z" fill="#d4892a" stroke="#b0701c" stroke-width="0.6"/><path d="M1.4 2.6 h6.3 l-1.3 3.9 h-5.9z" fill="#f5cf72" stroke="#c98526" stroke-width="0.55"/><path d="M2 4.3 h3.5" stroke="#fbe6b0" stroke-width="0.6"/></svg>
<div class="t" style="left:130.8px;top:294px;color:#4a4843;font-size:6.5px;letter-spacing:0.09px;;-webkit-text-stroke:0">Information Flo...</div>
<div style="position:absolute;left:121px;top:303px;width:62px;height:1px;background:#a9a7a3"></div>
<div style="position:absolute;left:121px;top:304px;width:62px;height:10px;background:linear-gradient(#f4f3f1,#d6d4d1)"></div>
<svg style="position:absolute;left:122px;top:306px;" width="8" height="7" viewBox="0 0 8 7"><path d="M0.5 0.6 h2.6 l0.8 0.9 h3.2 v5 h-6.6z" fill="#d4892a" stroke="#b0701c" stroke-width="0.6"/><path d="M1.4 2.6 h6.3 l-1.3 3.9 h-5.9z" fill="#f5cf72" stroke="#c98526" stroke-width="0.55"/><path d="M2 4.3 h3.5" stroke="#fbe6b0" stroke-width="0.6"/></svg>
<div class="t" style="left:130.8px;top:305px;color:#4a4843;font-size:6.5px;letter-spacing:0.25px;-webkit-text-stroke:0">Common</div>
<div style="position:absolute;left:121px;top:314px;width:62px;height:1px;background:#a9a7a3"></div>
<div style="position:absolute;left:121px;top:315px;width:62px;height:10px;background:#efeeec"></div>
<svg style="position:absolute;left:122px;top:317px;" width="8" height="7" viewBox="0 0 8 7"><path d="M0.5 0.6 h2.6 l0.8 0.9 h3.2 v5 h-6.6z" fill="#d4892a" stroke="#b0701c" stroke-width="0.6"/><path d="M1.4 2.6 h6.3 l-1.3 3.9 h-5.9z" fill="#f5cf72" stroke="#c98526" stroke-width="0.55"/><path d="M2 4.3 h3.5" stroke="#fbe6b0" stroke-width="0.6"/></svg>
<div class="t" style="left:130.8px;top:316px;color:#4a4843;font-size:6.5px;letter-spacing:0.09px;;-webkit-text-stroke:0">Free drawing</div>
<svg style="position:absolute;left:176px;top:319px;shape-rendering:crispEdges" width="6" height="3" viewBox="0 0 6 3"><rect x="1" y="0" width="1" height="1" fill="#6a6a6a"/><rect x="2" y="0" width="1" height="1" fill="#6a6a6a"/><rect x="3" y="0" width="1" height="1" fill="#6a6a6a"/><rect x="4" y="0" width="1" height="1" fill="#6a6a6a"/><rect x="0" y="1" width="1" height="1" fill="#6a6a6a"/><rect x="5" y="1" width="1" height="1" fill="#6a6a6a"/><rect x="1" y="2" width="1" height="1" fill="#6a6a6a"/><rect x="2" y="2" width="1" height="1" fill="#6a6a6a"/><rect x="3" y="2" width="1" height="1" fill="#6a6a6a"/><rect x="4" y="2" width="1" height="1" fill="#6a6a6a"/></svg>
<div class="t" style="left:137.9px;top:328px;color:#3c3b37;font-size:6.5px;letter-spacing:0.09px;">Rectangle</div>
<svg style="position:absolute;left:129px;top:329px;" width="8" height="6" viewBox="0 0 8 6"><rect x="0.5" y="0.5" width="6.5" height="5" fill="#d6f0fb" stroke="#1c3ce6" stroke-width="0.9"/></svg>
<div class="t" style="left:137.9px;top:340px;color:#44423e;font-size:6.5px;letter-spacing:0.09px;;-webkit-text-stroke:0">Ellipse</div>
<svg style="position:absolute;left:129px;top:341px;" width="8" height="6" viewBox="0 0 8 6"><ellipse cx="3.5" cy="2.5" rx="3" ry="2" fill="#eef4ff" stroke="#1c3ce6" stroke-width="0.9"/></svg>
<div class="t" style="left:137.9px;top:351px;color:#3c3b37;font-size:6.5px;letter-spacing:0.09px;">Text</div>
<svg style="position:absolute;left:130.5px;top:352px;" width="8" height="6" viewBox="0 0 8 6"><path d="M0.4 0.7 H4.6 M2.5 0.7 V5" stroke="#1c3ce6" stroke-width="1.3"/></svg>
<div class="t" style="left:137.9px;top:362px;color:#44423e;font-size:6.5px;letter-spacing:0.09px;;-webkit-text-stroke:0">Line</div>
<svg style="position:absolute;left:129px;top:363.5px;" width="8" height="6" viewBox="0 0 8 6"><path d="M0 2.5 H7" stroke="#1c3ce6" stroke-width="1"/><path d="M4.2 0.8 L6.2 2.5 L4.2 4.2" fill="none" stroke="#1c3ce6" stroke-width="0.8"/></svg>
<div style="position:absolute;left:184px;top:36px;width:429px;height:338px;background:#fdfdf0"></div>
<div style="position:absolute;left:184px;top:36px;width:1px;height:338px;background:#c6c4bf"></div>
<svg style="position:absolute;left:185px;top:36px;shape-rendering:crispEdges" width="428" height="338" viewBox="0 0 428 338"><rect x="9" y="4" width="1" height="329" fill="rgba(60,60,50,0.085)"/><rect x="19" y="4" width="1" height="329" fill="rgba(60,60,50,0.085)"/><rect x="29" y="4" width="1" height="329" fill="rgba(60,60,50,0.085)"/><rect x="39" y="4" width="1" height="329" fill="rgba(60,60,50,0.085)"/><rect x="49" y="4" width="1" height="329" fill="rgba(60,60,50,0.085)"/><rect x="59" y="4" width="1" height="329" fill="rgba(60,60,50,0.085)"/><rect x="69" y="4" width="1" height="329" fill="rgba(60,60,50,0.085)"/><rect x="79" y="4" width="1" height="329" fill="rgba(60,60,50,0.085)"/><rect x="89" y="4" width="1" height="329" fill="rgba(60,60,50,0.085)"/><rect x="99" y="4" width="1" height="329" fill="rgba(60,60,50,0.085)"/><rect x="109" y="4" width="1" height="329" fill="rgba(60,60,50,0.085)"/><rect x="119" y="4" width="1" height="329" fill="rgba(60,60,50,0.085)"/><rect x="129" y="4" width="1" height="329" fill="rgba(60,60,50,0.085)"/><rect x="139" y="4" width="1" height="329" fill="rgba(60,60,50,0.085)"/><rect x="149" y="4" width="1" height="329" fill="rgba(60,60,50,0.085)"/><rect x="159" y="4" width="1" height="329" fill="rgba(60,60,50,0.085)"/><rect x="169" y="4" width="1" height="329" fill="rgba(60,60,50,0.085)"/><rect x="179" y="4" width="1" height="329" fill="rgba(60,60,50,0.085)"/><rect x="189" y="4" width="1" height="329" fill="rgba(60,60,50,0.085)"/><rect x="199" y="4" width="1" height="329" fill="rgba(60,60,50,0.085)"/><rect x="209" y="4" width="1" height="329" fill="rgba(60,60,50,0.085)"/><rect x="219" y="4" width="1" height="329" fill="rgba(60,60,50,0.085)"/><rect x="229" y="4" width="1" height="329" fill="rgba(60,60,50,0.085)"/><rect x="239" y="4" width="1" height="329" fill="rgba(60,60,50,0.085)"/><rect x="249" y="4" width="1" height="329" fill="rgba(60,60,50,0.085)"/><rect x="259" y="4" width="1" height="329" fill="rgba(60,60,50,0.085)"/><rect x="269" y="4" width="1" height="329" fill="rgba(60,60,50,0.085)"/><rect x="279" y="4" width="1" height="329" fill="rgba(60,60,50,0.085)"/><rect x="289" y="4" width="1" height="329" fill="rgba(60,60,50,0.085)"/><rect x="299" y="4" width="1" height="329" fill="rgba(60,60,50,0.085)"/><rect x="309" y="4" width="1" height="329" fill="rgba(60,60,50,0.085)"/><rect x="319" y="4" width="1" height="329" fill="rgba(60,60,50,0.085)"/><rect x="329" y="4" width="1" height="329" fill="rgba(60,60,50,0.085)"/><rect x="339" y="4" width="1" height="329" fill="rgba(60,60,50,0.085)"/><rect x="349" y="4" width="1" height="329" fill="rgba(60,60,50,0.085)"/><rect x="359" y="4" width="1" height="329" fill="rgba(60,60,50,0.085)"/><rect x="369" y="4" width="1" height="329" fill="rgba(60,60,50,0.085)"/><rect x="379" y="4" width="1" height="329" fill="rgba(60,60,50,0.085)"/><rect x="389" y="4" width="1" height="329" fill="rgba(60,60,50,0.085)"/><rect x="399" y="4" width="1" height="329" fill="rgba(60,60,50,0.085)"/><rect x="409" y="4" width="1" height="329" fill="rgba(60,60,50,0.085)"/><rect x="419" y="4" width="1" height="329" fill="rgba(60,60,50,0.085)"/><rect x="4" y="10" width="420" height="1" fill="rgba(50,50,60,0.125)"/><rect x="4" y="20" width="420" height="1" fill="rgba(50,50,60,0.125)"/><rect x="4" y="30" width="420" height="1" fill="rgba(50,50,60,0.125)"/><rect x="4" y="40" width="420" height="1" fill="rgba(50,50,60,0.125)"/><rect x="4" y="50" width="420" height="1" fill="rgba(50,50,60,0.125)"/><rect x="4" y="60" width="420" height="1" fill="rgba(50,50,60,0.125)"/><rect x="4" y="70" width="420" height="1" fill="rgba(50,50,60,0.125)"/><rect x="4" y="80" width="420" height="1" fill="rgba(50,50,60,0.125)"/><rect x="4" y="90" width="420" height="1" fill="rgba(50,50,60,0.125)"/><rect x="4" y="100" width="420" height="1" fill="rgba(50,50,60,0.125)"/><rect x="4" y="110" width="420" height="1" fill="rgba(50,50,60,0.125)"/><rect x="4" y="120" width="420" height="1" fill="rgba(50,50,60,0.125)"/><rect x="4" y="130" width="420" height="1" fill="rgba(50,50,60,0.125)"/><rect x="4" y="140" width="420" height="1" fill="rgba(50,50,60,0.125)"/><rect x="4" y="150" width="420" height="1" fill="rgba(50,50,60,0.125)"/><rect x="4" y="160" width="420" height="1" fill="rgba(50,50,60,0.125)"/><rect x="4" y="170" width="420" height="1" fill="rgba(50,50,60,0.125)"/><rect x="4" y="180" width="420" height="1" fill="rgba(50,50,60,0.125)"/><rect x="4" y="190" width="420" height="1" fill="rgba(50,50,60,0.125)"/><rect x="4" y="200" width="420" height="1" fill="rgba(50,50,60,0.125)"/><rect x="4" y="210" width="420" height="1" fill="rgba(50,50,60,0.125)"/><rect x="4" y="220" width="420" height="1" fill="rgba(50,50,60,0.125)"/><rect x="4" y="230" width="420" height="1" fill="rgba(50,50,60,0.125)"/><rect x="4" y="240" width="420" height="1" fill="rgba(50,50,60,0.125)"/><rect x="4" y="250" width="420" height="1" fill="rgba(50,50,60,0.125)"/><rect x="4" y="260" width="420" height="1" fill="rgba(50,50,60,0.125)"/><rect x="4" y="270" width="420" height="1" fill="rgba(50,50,60,0.125)"/><rect x="4" y="280" width="420" height="1" fill="rgba(50,50,60,0.125)"/><rect x="4" y="290" width="420" height="1" fill="rgba(50,50,60,0.125)"/><rect x="4" y="300" width="420" height="1" fill="rgba(50,50,60,0.125)"/><rect x="4" y="310" width="420" height="1" fill="rgba(50,50,60,0.125)"/><rect x="4" y="320" width="420" height="1" fill="rgba(50,50,60,0.125)"/><rect x="4" y="330" width="420" height="1" fill="rgba(50,50,60,0.125)"/></svg>
<div style="position:absolute;left:119px;top:377px;width:493px;height:123px;border:1px solid #c9c7c3;border-top-color:#d9d7d4;border-right-color:#c3c1bd;border-bottom-color:#cfcdca;border-radius:3px 3px 0 0;background:#f2f1f0"></div>
<svg style="position:absolute;left:120px;top:377px;" width="493" height="17" viewBox="0 0 493 17"><path d="M0 1 L38 1 C40.5 1 41.5 1 43 2.5 L52.5 12 C54.5 14 56 15.5 59 15.5 L493 15.5 L493 17 L0 17Z" fill="#fff"/><path d="M38 0.5 C40.5 0.5 41.5 1 43 2.5 L52.5 12 C54.5 14 56 15.5 59 15.5 L493 15.5" fill="none" stroke="#999793" stroke-width="0.9"/></svg>
<svg style="position:absolute;left:121px;top:381px;" width="8" height="8" viewBox="0 0 8 8"><rect x="1.2" y="0" width="5.2" height="3.8" fill="#5aa4f0" stroke="#3f86d8" stroke-width="0.4"/><rect x="2.6" y="1" width="2.4" height="1.8" fill="#e2a420"/><path d="M3.8 3.8 V4.9 M1.6 4.9 H6 M1.6 4.9 V5.8 M6 4.9 V5.8" stroke="#d6a030" stroke-width="0.7"/><rect x="0.2" y="5.6" width="3" height="2.3" fill="#dca020"/><rect x="4.4" y="5.6" width="3" height="2.3" fill="#dca020"/></svg>
<div class="t" style="left:130.9px;top:382px;color:#3c3b37;font-size:6.5px;letter-spacing:0.25px">Outline</div>
<svg style="position:absolute;left:156px;top:382px;shape-rendering:crispEdges" width="6" height="6" viewBox="0 0 6 6"><rect x="0" y="0" width="1" height="1" fill="#8c8c8c"/><rect x="1" y="0" width="1" height="1" fill="#333333"/><rect x="4" y="0" width="1" height="1" fill="#333333"/><rect x="5" y="0" width="1" height="1" fill="#8c8c8c"/><rect x="0" y="1" width="1" height="1" fill="#333333"/><rect x="2" y="1" width="1" height="1" fill="#333333"/><rect x="3" y="1" width="1" height="1" fill="#333333"/><rect x="5" y="1" width="1" height="1" fill="#333333"/><rect x="1" y="2" width="1" height="1" fill="#333333"/><rect x="4" y="2" width="1" height="1" fill="#333333"/><rect x="1" y="3" width="1" height="1" fill="#333333"/><rect x="4" y="3" width="1" height="1" fill="#333333"/><rect x="0" y="4" width="1" height="1" fill="#333333"/><rect x="2" y="4" width="1" height="1" fill="#333333"/><rect x="3" y="4" width="1" height="1" fill="#333333"/><rect x="5" y="4" width="1" height="1" fill="#333333"/><rect x="0" y="5" width="1" height="1" fill="#8c8c8c"/><rect x="1" y="5" width="1" height="1" fill="#333333"/><rect x="4" y="5" width="1" height="1" fill="#333333"/><rect x="5" y="5" width="1" height="1" fill="#8c8c8c"/></svg>
<svg style="position:absolute;left:175px;top:381px;" width="8" height="8" viewBox="0 0 8 8"><rect x="0" y="0.5" width="1" height="7.5" fill="#b07840"/><path d="M1 0.5 Q3 1.5 4 0.8 Q6 0 7.5 1 V4.8 Q6 4 4 4.6 Q3 5.2 1 4.5z" fill="#3ac23a"/></svg>
<div class="t" style="left:184.6px;top:382px;color:#3c3b37;font-size:6.5px;letter-spacing:0.42px">Audit</div>
<svg style="position:absolute;left:200px;top:377px;" width="3" height="16" viewBox="0 0 3 16"><path d="M0 0.5 L2 2.5 V16" fill="none" stroke="#b9b7b3" stroke-width="0.9"/></svg>
<svg style="position:absolute;left:205px;top:381px;" width="8" height="8" viewBox="0 0 8 8"><rect x="0.5" y="0.5" width="6.5" height="6.5" fill="#8da2cc" stroke="#4a5070" stroke-width="0.6"/><rect x="0.5" y="0.5" width="6.5" height="1.6" fill="#4a5a9a"/><circle cx="5.6" cy="5.6" r="2.2" fill="#c23030"/><path d="M5.6 3.4 A2.2 2.2 0 0 1 7.8 5.6 H5.6z" fill="#2a2a80"/></svg>
<div class="t" style="left:214.7px;top:382px;color:#3c3b37;font-size:6.5px;letter-spacing:0.15px">Element</div>
<svg style="position:absolute;left:238px;top:377px;" width="3" height="16" viewBox="0 0 3 16"><path d="M0 0.5 L2 2.5 V16" fill="none" stroke="#b9b7b3" stroke-width="0.9"/></svg>
<svg style="position:absolute;left:244px;top:381px;" width="8" height="8" viewBox="0 0 8 8"><path d="M0.5 0.5 H4 L6 2.5 V7.8 H0.5z" fill="#f6f8fc" stroke="#93a6cc" stroke-width="0.7"/></svg>
<div class="t" style="left:252.8px;top:382px;color:#3c3b37;font-size:6.5px;letter-spacing:0.09px;">Script</div>
<svg style="position:absolute;left:269px;top:377px;" width="3" height="16" viewBox="0 0 3 16"><path d="M0 0.5 L2 2.5 V16" fill="none" stroke="#b9b7b3" stroke-width="0.9"/></svg>
<svg style="position:absolute;left:274px;top:381px;" width="8" height="8" viewBox="0 0 8 8"><rect x="0" y="0.5" width="4" height="4" fill="#4f7fb8"/><path d="M1.2 7.2 L7.2 1.2" stroke="#d4a43a" stroke-width="2.6" stroke-linecap="round"/><path d="M2.2 6.2 L3.2 5.2 M4.5 3.9 L5.5 2.9" stroke="#f8e4a0" stroke-width="0.9"/><circle cx="4" cy="4.4" r="0.6" fill="#fff"/></svg>
<div class="t" style="left:283.8px;top:382px;color:#3c3b37;font-size:6.5px;letter-spacing:0.09px;">Link Editor</div>
<svg style="position:absolute;left:315px;top:377px;" width="3" height="16" viewBox="0 0 3 16"><path d="M0 0.5 L2 2.5 V16" fill="none" stroke="#b9b7b3" stroke-width="0.9"/></svg>
<svg style="position:absolute;left:319.5px;top:381px;" width="8" height="8" viewBox="0 0 8 8"><rect x="0.4" y="0.4" width="7.4" height="7.4" fill="#e2e8f6" stroke="#93a8d8" stroke-width="0.6"/><circle cx="4" cy="4.2" r="2.7" fill="#d03a20"/><path d="M4 1.5 A2.7 2.7 0 0 1 6.7 4.2 L4 4.2z" fill="#2a2a88"/><path d="M1.3 4.2 A2.7 2.7 0 0 1 4 1.5 V4.2z" fill="#f0b020"/></svg>
<div class="t" style="left:329.7px;top:382px;color:#3c3b37;font-size:6.5px;letter-spacing:0.09px;">Diagrams</div>
<svg style="position:absolute;left:356px;top:377px;" width="3" height="16" viewBox="0 0 3 16"><path d="M0 0.5 L2 2.5 V16" fill="none" stroke="#b9b7b3" stroke-width="0.9"/></svg>
<svg style="position:absolute;left:361px;top:381px;" width="8" height="8" viewBox="0 0 8 8"><rect x="0.5" y="0.5" width="7" height="7" fill="#f2f4f8" stroke="#6f7faa" stroke-width="0.7"/><rect x="0.5" y="0.5" width="7" height="1.8" fill="#6f7faa"/><path d="M1.5 4.3 h1.5 M4.5 4.3 h1.5 M1.5 6.2 h1.5 M4.5 6.2 h1.5" stroke="#d84a4a" stroke-width="0.8"/></svg>
<div class="t" style="left:370.7px;top:382px;color:#3c3b37;font-size:6.5px;letter-spacing:0.2px">Symbol</div>
<svg style="position:absolute;left:392px;top:377px;" width="3" height="16" viewBox="0 0 3 16"><path d="M0 0.5 L2 2.5 V16" fill="none" stroke="#b9b7b3" stroke-width="0.9"/></svg>
<svg style="position:absolute;left:397px;top:381px;" width="8" height="8" viewBox="0 0 8 8"><rect x="0.5" y="1" width="7.5" height="6" rx="0.6" fill="#f8dc90" stroke="#cc9430" stroke-width="0.7"/><path d="M1.8 5.5 L3.5 2.8 L5.2 5.5" fill="none" stroke="#3a3a3a" stroke-width="0.8"/></svg>
<div class="t" style="left:406.6px;top:382px;color:#3c3b37;font-size:6.5px;letter-spacing:0.09px;">Notes and constraints</div>
<svg style="position:absolute;left:470px;top:377px;" width="3" height="16" viewBox="0 0 3 16"><path d="M0 0.5 L2 2.5 V16" fill="none" stroke="#b9b7b3" stroke-width="0.9"/></svg>
<svg style="position:absolute;left:584px;top:381px;" width="8" height="4" viewBox="0 0 8 4"><path d="M0.5 0 V2.5 H6.5 V0" fill="none" stroke="#2e2e2e" stroke-width="1.1"/></svg>
<svg style="position:absolute;left:599px;top:381px;" width="8" height="6" viewBox="0 0 8 6"><path d="M0.6 0 V5.4 H6.4 V0" fill="none" stroke="#2e2e2e" stroke-width="1.1"/><rect x="2" y="0.5" width="3" height="1.5" fill="#bbb"/></svg>
<div style="position:absolute;left:120px;top:393px;width:135px;height:107px;background:#fff"></div>
<div style="position:absolute;left:120px;top:394px;width:1px;height:107px;background:#d4d2cf"></div>
<div style="position:absolute;left:121px;top:394px;width:134px;height:1px;background:#eeedeb"></div>
<div style="position:absolute;left:120px;top:500px;width:135px;height:1px;background:#dddbd8"></div>
<div style="position:absolute;left:255px;top:394px;width:1px;height:107px;background:#e9e8e6"></div>
</body></html>
